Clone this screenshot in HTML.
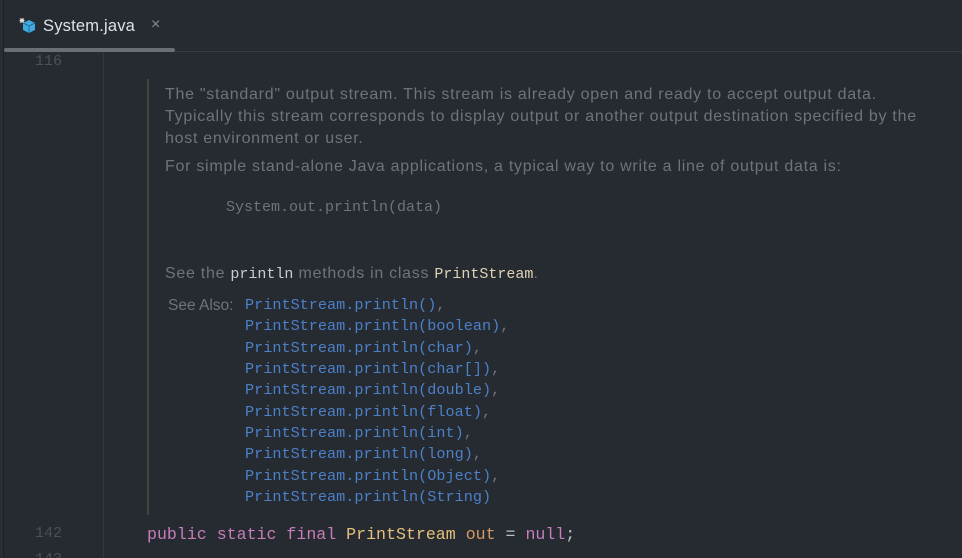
<!DOCTYPE html>
<html style="height:558px;overflow:hidden"><head><style>
body{margin:0;width:962px;height:558px;background:#2b2d30;overflow:hidden;position:relative;font-family:"Liberation Sans",sans-serif}
.win{position:absolute;left:3px;top:0;right:0;bottom:0;background:#262a31;border-left:1px solid #1e2024;overflow:hidden}
.tabs{position:absolute;left:0;top:0;right:0;height:51px;border-bottom:1px solid #393b40;background:#262a31}
.tab{position:absolute;left:39px;top:17px;color:#dfe1e5;font-size:16.5px;letter-spacing:0.2px}
.x{position:absolute;left:147px;top:16px;color:#8b8e94;font-size:16px}
.ul{position:absolute;left:0;top:48px;width:171px;height:4px;background:#6b6e74;border-radius:2px}
.gut{position:absolute;left:99px;top:52px;bottom:0;width:1px;background:#34373c}
.ln{position:absolute;left:31px;color:#4b5059;font-family:"Liberation Mono",monospace;font-size:15px}
.bar{position:absolute;left:143px;top:79px;width:2px;height:436px;background:#3d4a35}
.d{position:absolute;left:161px;color:#6f737a;font-size:16px;letter-spacing:0.72px;line-height:22px;white-space:nowrap}
.m{font-family:"Liberation Mono",monospace;font-size:15px;letter-spacing:0}
.a{position:absolute;left:241px;color:#4c80c8;font-family:"Liberation Mono",monospace;font-size:15.2px;line-height:21.33px;white-space:pre}
.a span{color:#6f737a}
.code{position:absolute;left:143px;top:525px;font-family:"Liberation Mono",monospace;font-size:16.6px;white-space:pre;color:#bcbec4}
</style></head><body><div class="win">
<div class="tabs">
<svg style="position:absolute;left:15px;top:17px" width="18" height="18" viewBox="0 0 18 18"><path d="M4 6 L10 3 L16 6 L16 13 L10 16 L4 13Z" fill="#3fa9e0"/><path d="M4 6 L10 9 L16 6 M10 9 L10 16" stroke="#1e6f9a" stroke-width="1" fill="none"/><path d="M3 1v5M0.5 3.5h5M1 1.5l4 4M5 1.5l-4 4" stroke="#dfe1e5" stroke-width="1"/></svg>
<div class="tab">System.java</div><div class="x">×</div>
<div class="ul"></div></div>
<div class="gut"></div>
<div class="ln" style="top:53px">116</div>
<div class="ln" style="top:525px">142</div>
<div class="ln" style="top:551px">143</div>
<div class="bar"></div>
<div class="d" style="top:84px">The "standard" output stream. This stream is already open and ready to accept output data.<br>Typically this stream corresponds to display output or another output destination specified by the<br>host environment or user.</div>
<div class="d" style="top:156px">For simple stand-alone Java applications, a typical way to write a line of output data is:</div>
<div class="d m" style="top:197px;left:222px">System.out.println(data)</div>
<div class="d" style="top:263px">See the <span class="m" style="color:#c9ccd1">println</span> methods in class <span class="m" style="color:#dfd3b6">PrintStream</span>.</div>
<div class="d" style="top:295px;left:164px;font-size:15.5px;letter-spacing:0">See Also:</div>
<div class="a" style="top:295px">PrintStream.println()<span>,</span>
PrintStream.println(boolean)<span>,</span>
PrintStream.println(char)<span>,</span>
PrintStream.println(char[])<span>,</span>
PrintStream.println(double)<span>,</span>
PrintStream.println(float)<span>,</span>
PrintStream.println(int)<span>,</span>
PrintStream.println(long)<span>,</span>
PrintStream.println(Object)<span>,</span>
PrintStream.println(String)</div>
<div class="code"><span style="color:#c77dbb">public static final</span> <span style="color:#e5c07b">PrintStream</span> <span style="color:#d19a66">out</span> = <span style="color:#c77dbb">null</span>;</div>
</div></body></html>
